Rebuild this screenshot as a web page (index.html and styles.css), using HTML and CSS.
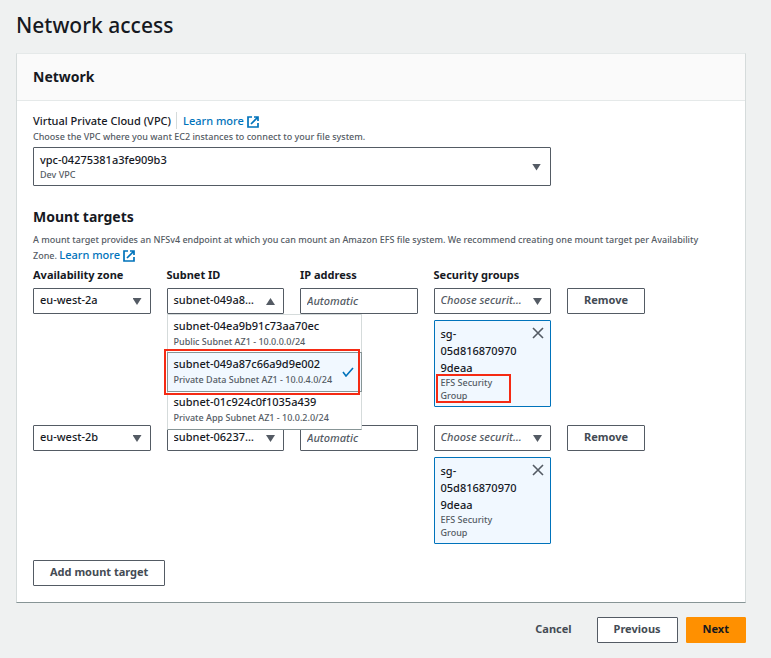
FILE: index.html
```html
<!DOCTYPE html>
<html lang="en">
<head>
<meta charset="utf-8">
<meta name="viewport" content="width=device-width, initial-scale=1">
<title>Network access</title>
<link rel="stylesheet" href="styles.css">
</head>
<body>
<svg class="sprite" aria-hidden="true">
  <symbol id="external" viewBox="0 0 12 12">
    <path d="M5 1H1v10h10V7M7 1h4v4M11 1 4 8" fill="none" stroke="currentColor" stroke-width="1.7"/>
  </symbol>
  <symbol id="close" viewBox="0 0 12 12">
    <path d="M1 1l10 10M11 1L1 11" fill="none" stroke="currentColor" stroke-width="1.6"/>
  </symbol>
</svg>
<main class="page">
  <h1 class="page-title">Network access</h1>
  <section class="card">
    <header class="card-header"><h2 class="heading">Network</h2></header>
    <div class="card-body">
      <div class="vpc">
        <div class="label-row">
          <span class="label" id="vpc-label">Virtual Private Cloud (VPC)</span>
          <a class="link divided" href="#">Learn more <svg class="external"><use href="#external"/></svg></a>
        </div>
        <p class="hint">Choose the VPC where you want EC2 instances to connect to your file system.</p>
        <button class="control vpc-select" type="button" aria-haspopup="listbox" aria-labelledby="vpc-label vpc-value">
          <span class="name" id="vpc-value">vpc-04275381a3fe909b3</span>
          <span class="detail">Dev VPC</span>
        </button>
      </div>

      <h2 class="heading">Mount targets</h2>
      <p class="description">A mount target provides an NFSv4 endpoint at which you can mount an Amazon EFS file system. We recommend creating one mount target per Availability Zone. <a class="link" href="#">Learn more <svg class="external"><use href="#external"/></svg></a></p>

      <div class="targets column-labels">
        <span id="az">Availability zone</span>
        <span id="subnet">Subnet ID</span>
        <span id="ip">IP address</span>
        <span id="sg">Security groups</span>
      </div>

      <div class="targets target-row">
        <div class="select"><select class="control" aria-labelledby="az"><option>eu-west-2a</option></select></div>
        <div class="select open">
          <button class="control" type="button" aria-haspopup="listbox" aria-expanded="true" aria-labelledby="subnet">subnet-049a8…</button>
          <ul class="menu" role="listbox" aria-labelledby="subnet">
            <li class="option" role="option" aria-selected="false"><span class="name">subnet-04ea9b91c73aa70ec</span><span class="detail">Public Subnet AZ1 - 10.0.0.0/24</span></li>
            <li class="option selected" role="option" aria-selected="true"><span class="name">subnet-049a87c66a9d9e002</span><span class="detail">Private Data Subnet AZ1 - 10.0.4.0/24</span>
              <svg class="check" viewBox="0 0 12 10" aria-hidden="true"><path d="M1 5l3 4 7-8" fill="none" stroke="currentColor" stroke-width="1.6"/></svg>
            </li>
            <li class="option" role="option" aria-selected="false"><span class="name">subnet-01c924c0f1035a439</span><span class="detail">Private App Subnet AZ1 - 10.0.2.0/24</span></li>
          </ul>
        </div>
        <input class="control" type="text" placeholder="Automatic" aria-labelledby="ip">
        <div class="groups">
          <div class="select"><select class="control empty" aria-labelledby="sg"><option>Choose security groups</option></select></div>
          <div class="token">
            <div class="token-text"><span class="token-name">sg-05d8168709709deaa</span><span class="token-detail marked">EFS Security Group</span></div>
            <button class="dismiss" type="button" aria-label="Remove security group"><svg><use href="#close"/></svg></button>
          </div>
        </div>
        <button class="button" type="button">Remove</button>
      </div>

      <div class="targets target-row">
        <div class="select"><select class="control" aria-labelledby="az"><option>eu-west-2b</option></select></div>
        <div class="select"><select class="control" aria-labelledby="subnet"><option>subnet-06237…</option></select></div>
        <input class="control" type="text" placeholder="Automatic" aria-labelledby="ip">
        <div class="groups">
          <div class="select"><select class="control empty" aria-labelledby="sg"><option>Choose security groups</option></select></div>
          <div class="token">
            <div class="token-text"><span class="token-name">sg-05d8168709709deaa</span><span class="token-detail">EFS Security Group</span></div>
            <button class="dismiss" type="button" aria-label="Remove security group"><svg><use href="#close"/></svg></button>
          </div>
        </div>
        <button class="button" type="button">Remove</button>
      </div>

      <button class="button" type="button">Add mount target</button>
    </div>
  </section>
  <footer class="actions">
    <button class="button plain" type="button">Cancel</button>
    <button class="button" type="button">Previous</button>
    <button class="button primary" type="button">Next</button>
  </footer>
</main>
</body>
</html>
```
FILE: styles.css
```css
* { box-sizing: border-box; }

body {
  margin: 0;
  background: #eff1f1;
  color: #16191f;
  font: 500 11px/17px "Noto Sans", "Open Sans", sans-serif;
}

button, input, select { font: inherit; color: inherit; }
h1, h2, p, ul { margin: 0; padding: 0; }

.sprite { position: absolute; width: 0; height: 0; }

.page { padding: 10px 25px 16px 16px; }

.page-title {
  margin-bottom: 13px;
  font-size: 21px;
  line-height: 30px;
  font-weight: 500;
}

.card {
  background: #fff;
  border: 1px solid #d5dbdb;
  border-top-color: #e5e9e9;
  border-bottom-color: #879596;
}

.card-header {
  padding: 13px 16px;
  background: #fafafa;
  border-bottom: 1px solid #e5e9e9;
}

.heading { font-size: 14px; line-height: 20px; font-weight: 700; }

.card-body { padding: 11px 16px 16px; }

.vpc { margin-bottom: 21px; }
.label-row { display: flex; align-items: center; margin-bottom: 1px; }
.link { color: #0073bb; font-size: 11px; text-decoration: none; }
.divided { margin-left: 5px; padding-left: 6px; border-left: 1px solid #d5dbdb; }
.external { width: 12px; height: 12px; vertical-align: -3px; }
.hint { font-size: 9px; line-height: 14px; color: #545b64; margin-bottom: 3px; }

.control {
  display: block;
  width: 100%;
  height: 26px;
  margin: 0;
  padding: 0 26px 3px 6px;
  background: #fff;
  border: 1px solid #545b64;
  border-radius: 1px;
  appearance: none;
  overflow: hidden;
  text-align: left;
  text-overflow: ellipsis;
  white-space: nowrap;
}
input.control::placeholder { color: #545b64; opacity: 1; font-style: italic; }
input.control { padding: 0 6px 1px; }
.empty { color: #545b64; font-style: italic; }

.name, .detail { display: block; }
.name { line-height: 17px; }
.detail { font-size: 9px; line-height: 14px; color: #545b64; }

.vpc-select {
  position: relative;
  width: calc((100% + 16px) * 3 / 4 - 16px);
  height: auto;
  padding: 3px 26px 3px 6px;
}

.select { position: relative; }
.select::after, .vpc-select::after {
  content: "";
  position: absolute;
  top: calc(50% - 3px);
  right: 9px;
  width: 9px;
  height: 7px;
  background: #545b64;
  clip-path: polygon(0 0, 100% 0, 50% 100%);
  pointer-events: none;
}
.select.open::after { clip-path: polygon(50% 0, 100% 100%, 0 100%); }

.description {
  margin-top: 5px;
  padding-right: 16px;
  font-size: 9px;
  line-height: 15px;
  color: #545b64;
}

.targets {
  display: grid;
  grid-template-columns: repeat(4, calc((100% + 16px) * 3 / 16 - 16px)) auto;
  column-gap: 16px;
  align-items: start;
  justify-items: start;
}
.targets > * { width: 100%; }
.targets > .button { width: auto; }
.column-labels { margin: 3px 0 5px; font-weight: 700; }
.target-row { margin-bottom: 18px; }
.target-row:last-of-type { margin-bottom: 16px; }

.menu {
  position: absolute;
  z-index: 1;
  top: 100%;
  left: 0;
  width: max-content;
  min-width: 195px;
  list-style: none;
  background: #fff;
  border: 1px solid #d5dbdb;
  border-bottom-color: #879596;
}
.option { position: relative; padding: 2px 20px 4px 6px; }
.option .detail { line-height: 15px; }
.selected { background: #f1f8ff; outline: 1px solid #879596; }
.check { position: absolute; right: 7px; top: 14px; width: 12px; height: 10px; color: #0073bb; }
.selected::after, .marked::after {
  content: "";
  position: absolute;
  border: 2px solid #f52a13;
}
.selected::after { inset: -4px 1px -4px -4px; }

.token {
  display: flex;
  justify-content: space-between;
  margin-top: 6px;
  padding: 4px 6px;
  background: #f1f8ff;
  border: 1px solid #0073bb;
  border-radius: 1px;
}
.token-text { width: 80px; }
.token-name { display: block; overflow-wrap: anywhere; }
.token-detail {
  display: block;
  position: relative;
  padding-right: 12px;
  font-size: 9px;
  line-height: 13px;
  color: #545b64;
}
.marked::after { inset: -2px 10px -1px -5px; }
.dismiss {
  width: 12px;
  height: 12px;
  margin-top: 2px;
  padding: 0;
  border: 0;
  background: none;
  color: #545b64;
}
.dismiss svg { display: block; width: 12px; height: 12px; }

.button {
  height: 26px;
  padding: 0 16px 3px;
  background: #fff;
  border: 1px solid #545b64;
  border-radius: 1px;
  color: #444b54;
  font-weight: 700;
}
.plain { background: none; border-color: transparent; }
.primary { background: #ff9000; border-color: #ff9000; color: #16191f; }

.actions { display: flex; justify-content: flex-end; gap: 8px; padding-top: 14px; }
```
